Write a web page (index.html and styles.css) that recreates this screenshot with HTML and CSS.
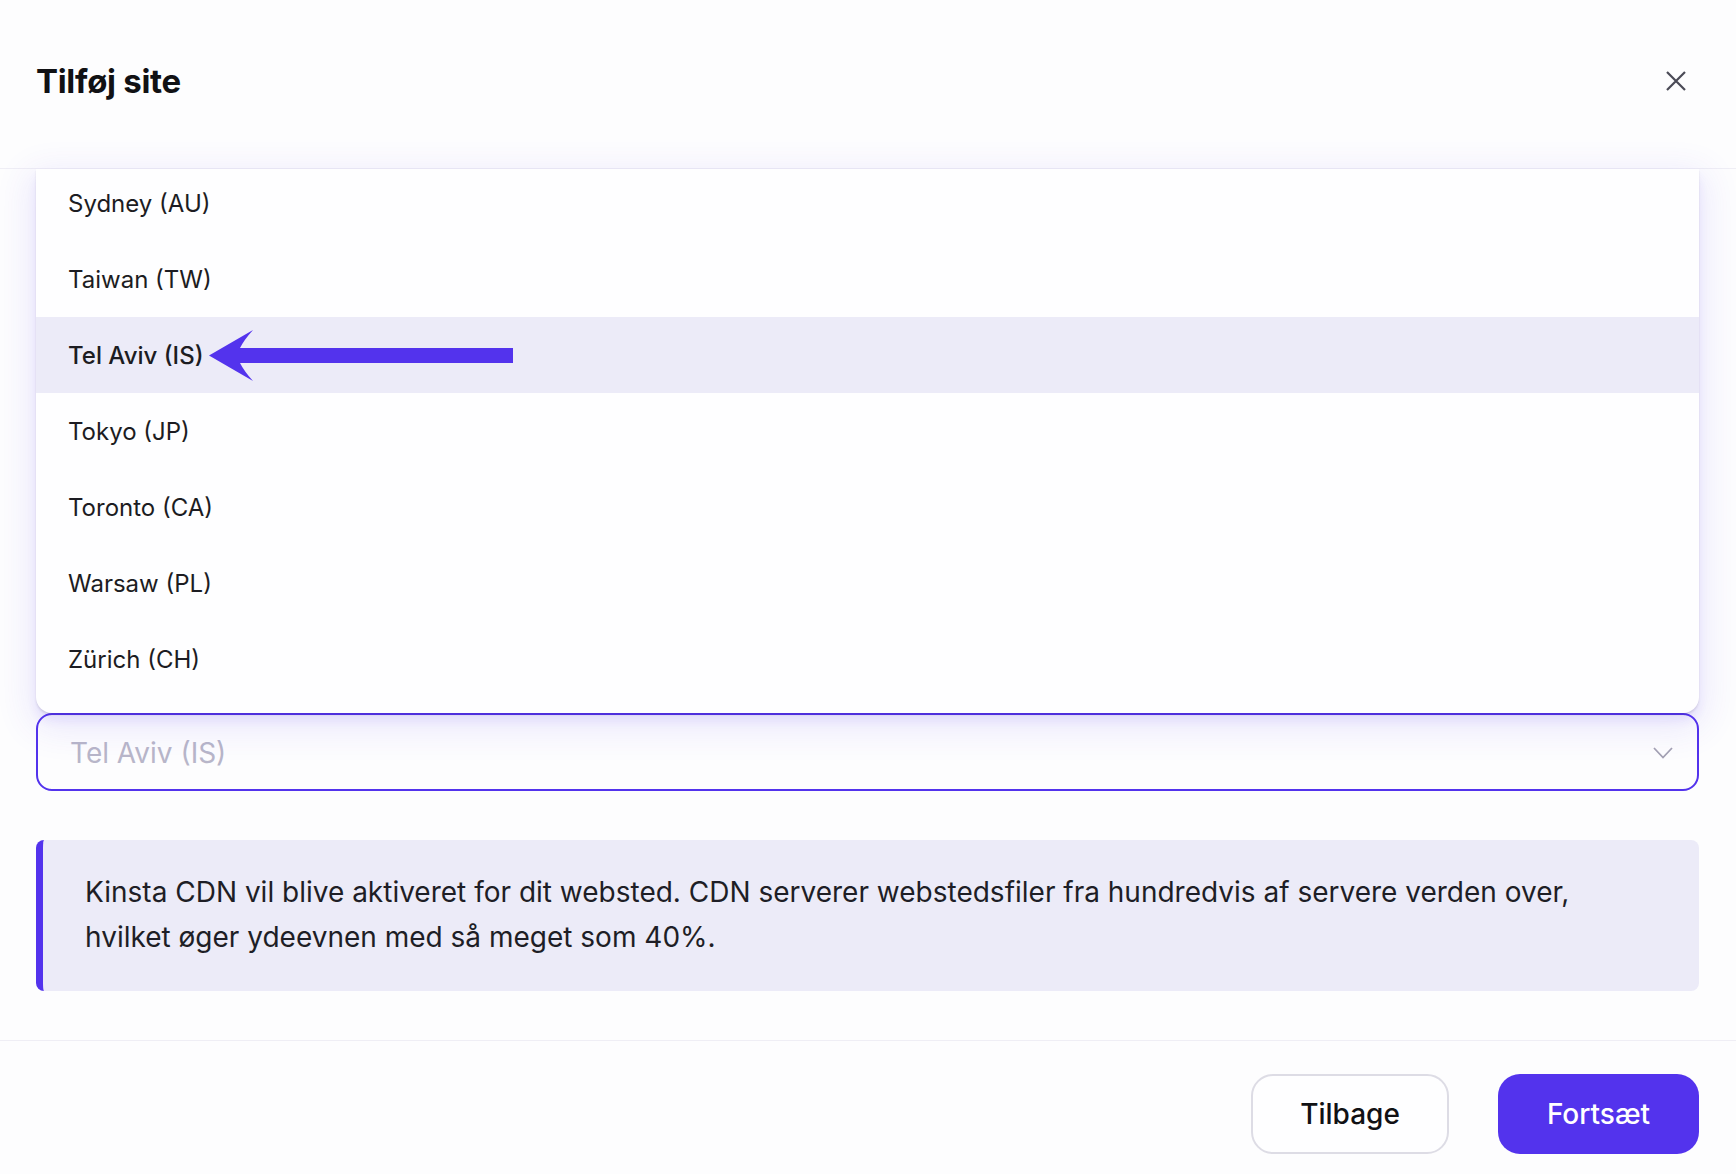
FILE: index.html
```html
<!DOCTYPE html>
<html lang="da">
<head>
<meta charset="utf-8">
<title>Tilføj site</title>
<link rel="stylesheet" href="styles.css">
</head>
<body>
<div class="modal">
  <header class="header">
    <h1 class="title">Tilføj site</h1>
    <button class="close" aria-label="Luk">
      <svg width="20" height="20" viewBox="0 0 20 20"><path d="M1 1 L19 19 M19 1 L1 19" stroke="#4a4a56" stroke-width="2.2" fill="none"/></svg>
    </button>
  </header>
  <main class="content">
    <div class="dropdown">
      <ul class="list">
        <li class="item">Sydney (AU)</li>
        <li class="item">Taiwan (TW)</li>
        <li class="item selected">Tel Aviv (IS)
          <svg class="arrow" width="306" height="54" viewBox="0 0 306 54"><path d="M1 27.5 L45 2 Q36 12 32 20 L305 20 L305 35 L32 35 Q36 43 45 53 Z" fill="#5333ed"/></svg>
        </li>
        <li class="item">Tokyo (JP)</li>
        <li class="item">Toronto (CA)</li>
        <li class="item">Warsaw (PL)</li>
        <li class="item">Zürich (CH)</li>
      </ul>
    </div>
    <div class="select">
      <span class="placeholder">Tel Aviv (IS)</span>
      <svg class="chevron" width="20" height="12" viewBox="0 0 20 12"><path d="M1 1 L10 10.5 L19 1" stroke="#a3a1b3" stroke-width="1.8" fill="none"/></svg>
    </div>
    <div class="notice">
      <p>Kinsta CDN vil blive aktiveret for dit websted. CDN serverer webstedsfiler fra hundredvis af servere verden over, hvilket øger ydeevnen med så meget som 40%.</p>
    </div>
  </main>
  <footer class="footer">
    <button class="btn btn-secondary">Tilbage</button>
    <button class="btn btn-primary">Fortsæt</button>
  </footer>
</div>
</body>
</html>
```
FILE: styles.css
```css
* { box-sizing: border-box; }
html, body { margin: 0; padding: 0; }
body {
  background: #fdfdfe;
  font-family: "Inter", "Noto Sans", sans-serif;
  color: #1a1a22;
  width: 1736px;
  height: 1174px;
  overflow: hidden;
}
.header {
  height: 169px;
  display: flex;
  align-items: center;
  justify-content: space-between;
  padding: 0 40px 6px 36px;
  border-bottom: 1px solid #efeef5;
}
.title {
  margin: 0;
  font-size: 33px;
  font-weight: 700;
  letter-spacing: -0.3px;
  color: #111114;
}
.close {
  width: 40px;
  height: 40px;
  border: 0;
  background: none;
  padding: 0;
  display: flex;
  align-items: center;
  justify-content: center;
  cursor: pointer;
}
.content {
  padding: 0 37px 49px 36px;
}
.dropdown {
  position: relative;
  z-index: 2;
  background: #fefeff;
  border-radius: 0 0 16px 16px;
  box-shadow: 0 10px 36px 6px rgba(83, 51, 237, 0.11), 0 8px 10px rgba(83, 51, 237, 0.08), 0 2px 2px rgba(40, 40, 60, 0.12);
  padding-bottom: 16px;
}
.list {
  list-style: none;
  margin: 0;
  padding: 0;
}
.item {
  position: relative;
  height: 76px;
  display: flex;
  align-items: center;
  padding-left: 32px;
  font-size: 24px;
  color: #1c1c22;
}
.item:first-child {
  height: 72px;
  padding-bottom: 4px;
}
.item.selected {
  background: #ecebf8;
  font-weight: 500;
}
.arrow {
  position: absolute;
  left: 172px;
  top: 11px;
}
.select {
  height: 78px;
  border: 2px solid #5333ed;
  border-radius: 16px;
  display: flex;
  align-items: center;
  justify-content: space-between;
  padding: 2px 24px 0 32px;
}
.placeholder {
  font-size: 28px;
  color: #b8b6c9;
}
.notice {
  margin-top: 49px;
  background: #ecebf8;
  border-left: 7px solid #5333ed;
  border-radius: 8px;
  padding: 30px 70px 31px 42px;
}
.notice p {
  margin: 0;
  font-size: 28px;
  line-height: 45px;
  color: #1e1e26;
}
.footer {
  border-top: 1px solid #efeef5;
  display: flex;
  justify-content: flex-end;
  gap: 49px;
  padding: 33px 37px 0 36px;
}
.btn {
  height: 80px;
  border-radius: 22px;
  font-family: "Inter", "Noto Sans", sans-serif;
  font-size: 28px;
  font-weight: 500;
  cursor: pointer;
}
.btn-secondary {
  width: 198px;
  background: #fefeff;
  border: 2px solid #dddce5;
  color: #111114;
}
.btn-primary {
  width: 201px;
  background: #5333ed;
  border: 0;
  color: #ffffff;
}
```
